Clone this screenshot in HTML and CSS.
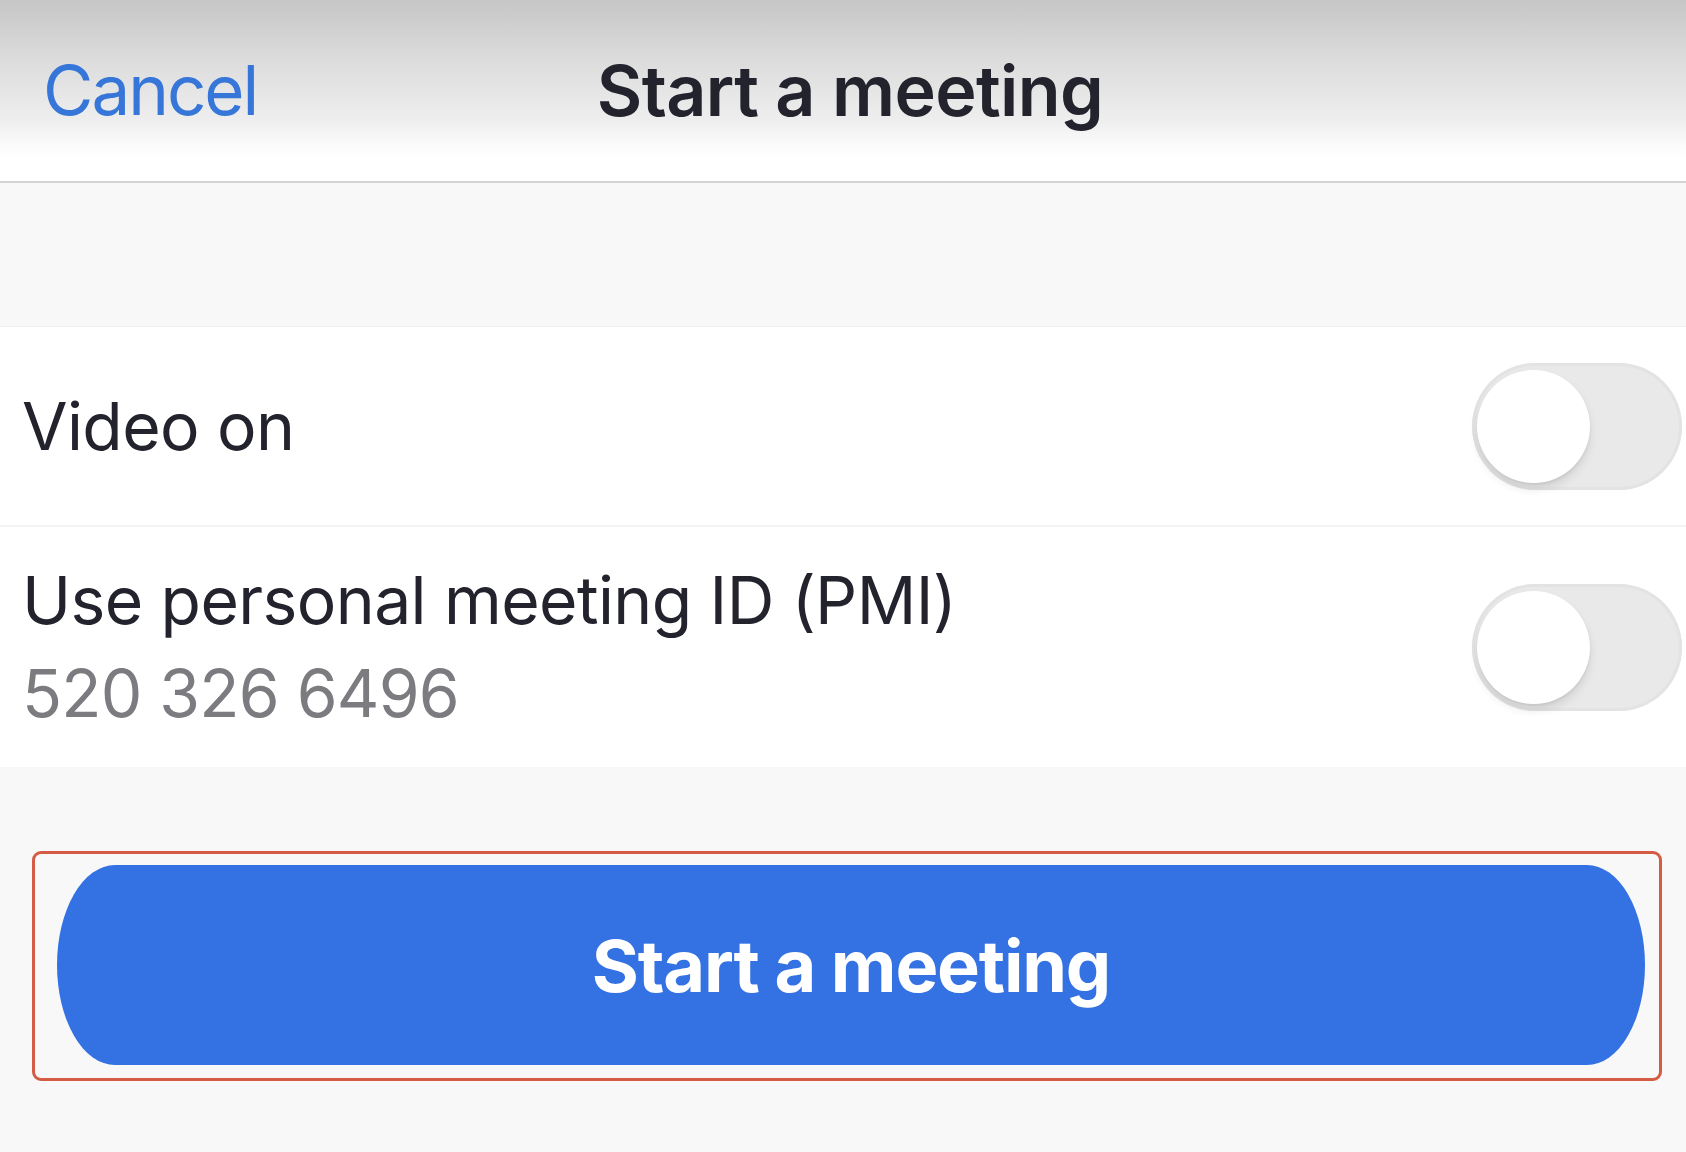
FILE: index.html
```html
<!DOCTYPE html>
<html lang="en">
<head>
<meta charset="utf-8">
<title>Start a meeting</title>
<link rel="stylesheet" href="styles.css">
</head>
<body>
<div class="screen">
  <header class="navbar">
    <span class="nav-cancel">Cancel</span>
    <h1 class="nav-title">Start a meeting</h1>
    <span class="nav-spacer"></span>
  </header>
  <div class="gap"></div>
  <section class="list">
    <div class="row row-single">
      <span class="row-label">Video on</span>
      <span class="toggle"><span class="knob"></span></span>
    </div>
    <div class="row row-double">
      <div class="row-text">
        <span class="row-label">Use personal meeting ID (PMI)</span>
        <span class="row-sub">520 326 6496</span>
      </div>
      <span class="toggle"><span class="knob"></span></span>
    </div>
  </section>
  <div class="footer">
    <div class="highlight">
      <button class="start-btn">Start a meeting</button>
    </div>
  </div>
</div>
</body>
</html>
```
FILE: styles.css
```css
* { box-sizing: border-box; }
html, body { margin: 0; padding: 0; }
body {
  width: 1686px;
  height: 1152px;
  overflow: hidden;
  background: #f8f8f8;
  font-family: Inter, "Noto Sans", "Liberation Sans", sans-serif;
  color: #23232d;
}
.screen { display: flex; flex-direction: column; height: 1152px; }

.navbar {
  height: 183px;
  flex: none;
  display: grid;
  grid-template-columns: 1fr auto 1fr;
  align-items: center;
  padding: 0 0 0 43px;
  background: linear-gradient(to bottom, #c6c6c6 0px, #dcdcdc 60px, #eeeeee 120px, #fbfbfb 145px, #ffffff 160px, #ffffff 100%);
  border-bottom: 2px solid #d3d3d3;
}
.nav-cancel {
  font-size: 69px;
  line-height: 1;
  letter-spacing: -2px;
  color: #3676d9;
  justify-self: start;
}
.nav-title {
  margin: 0 29px 0 0;
  font-size: 70px;
  line-height: 1;
  font-weight: 600;
  letter-spacing: -0.6px;
  color: #23232d;
}
.gap {
  height: 144px;
  flex: none;
  background: #f8f8f8;
  border-bottom: 1px solid #efefef;
}
.list { background: #ffffff; flex: none; }
.row {
  display: flex;
  align-items: center;
  justify-content: space-between;
  padding: 0 4px 0 22px;
}
.row-single { height: 200px; border-bottom: 2px solid #f3f3f3; }
.row-double { height: 240px; }
.row-text { display: flex; flex-direction: column; }
.row-label {
  font-size: 66px;
  line-height: 93px;
  letter-spacing: -0.6px;
  color: #23232d;
}
.row-sub {
  font-size: 66px;
  line-height: 93px;
  letter-spacing: -0.8px;
  color: #7b7b80;
}
.toggle {
  position: relative;
  flex: none;
  width: 210px;
  height: 127px;
  border-radius: 64px;
  background: #e9e9ea;
  box-shadow: inset 0 0 0 3px #e3e3e4;
}
.knob {
  position: absolute;
  left: 5px;
  top: 7px;
  width: 113px;
  height: 113px;
  border-radius: 50%;
  background: #ffffff;
  box-shadow: 0 6px 10px rgba(0,0,0,0.10), 0 2px 3px rgba(0,0,0,0.06);
}
.footer {
  flex: 1;
  padding: 84px 24px 0 32px;
  background: #f8f8f8;
}
.highlight {
  border: 3px solid #d45c45;
  border-radius: 9px;
  padding: 11px 14px 13px 22px;
}
.start-btn {
  display: block;
  width: 100%;
  height: 200px;
  border: none;
  border-radius: 58px / 100px;
  background: #3472e4;
  color: #ffffff;
  font-family: Inter, "Noto Sans", "Liberation Sans", sans-serif;
  font-size: 72px;
  font-weight: 700;
  letter-spacing: -1.2px;
  padding: 0;
}
```
